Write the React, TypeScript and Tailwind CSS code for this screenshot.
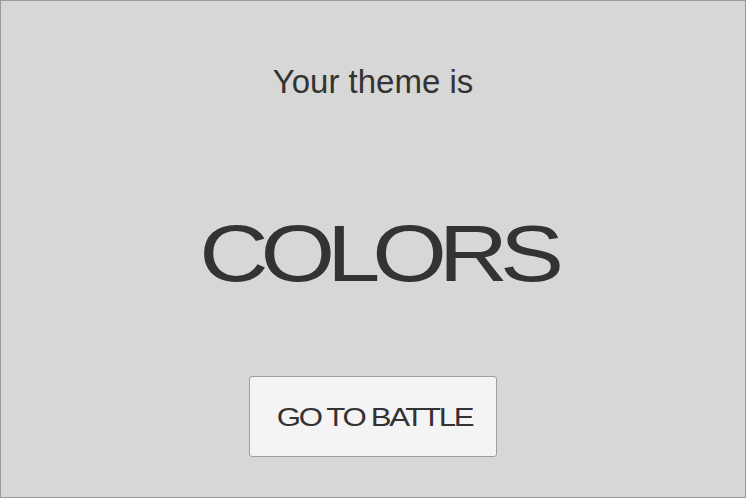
export default function App() {
  return (
    <div
      className="w-[746px] h-[498px] border border-[#9a9a9a] bg-[#d7d7d7] flex flex-col items-center text-[#333333]"
      style={{ fontFamily: '"Liberation Sans", Arial, sans-serif' }}
    >
      <p className="mt-[64px] text-[33px] leading-none">Your theme is</p>
      <h1 className="mt-[116px] ml-[9px] text-[80px] leading-none tracking-[-0.085em] scale-x-[1.2] font-normal">
        COLORS
      </h1>
      <button className="mt-[82px] w-[248px] h-[81px] bg-[#f4f4f4] border border-[#9e9e9e] rounded-[3px] flex items-center justify-center">
        <span className="ml-[2px] text-[26px] leading-none tracking-[-0.075em] scale-x-[1.2] text-[#333333]">
          GO TO BATTLE
        </span>
      </button>
    </div>
  );
}
